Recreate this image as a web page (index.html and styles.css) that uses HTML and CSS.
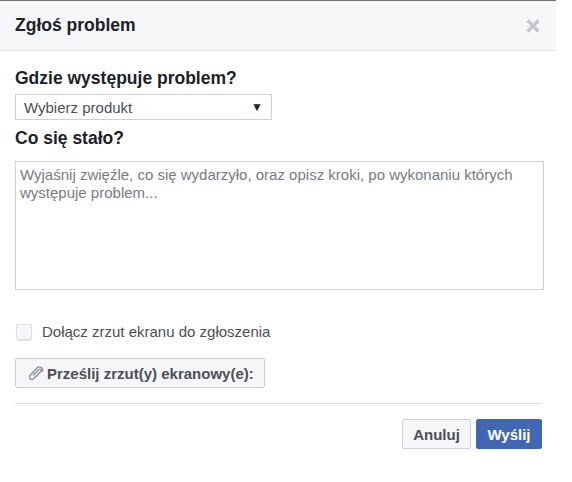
FILE: index.html
```html
<!DOCTYPE html>
<html lang="pl">
<head>
    <meta charset="UTF-8">
    <meta name="viewport" content="width=device-width, initial-scale=1.0">
    <title>Zgłoś problem</title>
    <link rel="stylesheet" href="styles.css">
</head>
<body>
    <div class="dialog">
        <div class="dialog-header">
            <h1>Zgłoś problem</h1>
            <svg class="close" width="14" height="14" viewBox="0 0 14 14" aria-label="Zamknij">
                <path d="M1.5 1.5 L12.5 12.5 M12.5 1.5 L1.5 12.5" stroke="#c4c7cf" stroke-width="3.4" fill="none"/>
            </svg>
        </div>
        <div class="dialog-body">
            <h2>Gdzie występuje problem?</h2>
            <div class="select">
                <span>Wybierz produkt</span>
                <span class="select-arrow">▼</span>
            </div>
            <h2 class="second">Co się stało?</h2>
            <div class="textarea">Wyjaśnij zwięźle, co się wydarzyło, oraz opisz kroki, po wykonaniu których występuje problem...</div>
            <div class="check-row">
                <span class="checkbox"></span>
                <span>Dołącz zrzut ekranu do zgłoszenia</span>
            </div>
            <div class="upload">
                <svg width="17" height="16" viewBox="0 0 17 16">
                    <path d="M6 10.6 L11.8 4.8 C13.2 3.5 15 5.3 13.7 6.7 L6.8 13.6 C4.6 15.8 0.9 12.7 3.2 10.2 L10 3 C12.7 0.3 17.2 3.5 15 6.6" stroke="#8d9096" stroke-width="1.4" fill="none"/>
                </svg>
                <span>Prześlij zrzut(y) ekranowy(e):</span>
            </div>
            <div class="divider"></div>
            <div class="actions">
                <button class="btn">Anuluj</button>
                <button class="btn btn-primary">Wyślij</button>
            </div>
        </div>
    </div>
</body>
</html>
```

FILE: styles.css
```css
body {
    margin: 0;
    background-color: #ffffff;
    font-family: "Liberation Sans", Arial, sans-serif;
    color: #1d2129;
}
.dialog {
    width: 556px;
    height: 462px;
    border-top: 1px solid #6f7072;
    box-sizing: border-box;
}
.dialog-header {
    display: flex;
    justify-content: space-between;
    align-items: center;
    height: 50px;
    box-sizing: border-box;
    padding: 0 15px;
    background: #f5f6f7;
    border-bottom: 1px solid #e5e5e5;
}
h1 {
    margin: 0;
    font-size: 17.5px;
    font-weight: bold;
    color: #1d2129;
}
.close {
    margin-top: 1px;
    margin-right: 1px;
}
.dialog-body {
    padding: 17px 14px 0 15px;
}
h2 {
    margin: 0;
    font-size: 17.5px;
    line-height: 20px;
    font-weight: bold;
}
.second {
    margin-top: 8px;
}
.select {
    display: flex;
    justify-content: space-between;
    align-items: center;
    width: 257px;
    height: 26px;
    margin-top: 6px;
    padding: 0 8px;
    box-sizing: border-box;
    border: 1px solid #ccd0d5;
    font-size: 15px;
    color: #4b4f56;
}
.select-arrow {
    font-size: 12px;
    color: #1d2129;
}
.textarea {
    width: 529px;
    height: 129px;
    margin-top: 13px;
    padding: 4px;
    box-sizing: border-box;
    border: 1px solid #ccd0d5;
    font-size: 15px;
    line-height: 18px;
    color: #777b82;
}
.check-row {
    display: flex;
    align-items: center;
    gap: 10px;
    margin-top: 33px;
    margin-left: 1px;
    font-size: 15px;
    color: #4b4f56;
}
.checkbox {
    width: 16px;
    height: 16px;
    box-sizing: border-box;
    background: #f5f6f7;
    border: 1px solid #dddfe2;
    border-radius: 3px;
    box-shadow: 0 1px 1px rgba(0, 0, 0, 0.12);
}
.upload {
    display: inline-flex;
    align-items: center;
    gap: 3px;
    height: 30px;
    margin-top: 18px;
    padding: 0 10px 0 11px;
    box-sizing: border-box;
    background: #f5f6f7;
    border: 1px solid #ccd0d5;
    border-radius: 2px;
    font-size: 15px;
    font-weight: bold;
    color: #4b4f56;
}
.divider {
    width: 527px;
    height: 1px;
    margin-top: 15px;
    background: #dddfe2;
}
.actions {
    display: flex;
    justify-content: flex-end;
    gap: 5px;
    margin-top: 15px;
}
.btn {
    width: 69px;
    height: 30px;
    padding: 0;
    background: #f5f6f7;
    border: 1px solid #ccd0d5;
    border-radius: 2px;
    font-family: inherit;
    font-size: 15px;
    font-weight: bold;
    color: #4b4f56;
}
.btn-primary {
    width: 66px;
    background: #4267b2;
    border-color: #4267b2;
    color: #ffffff;
}
```
